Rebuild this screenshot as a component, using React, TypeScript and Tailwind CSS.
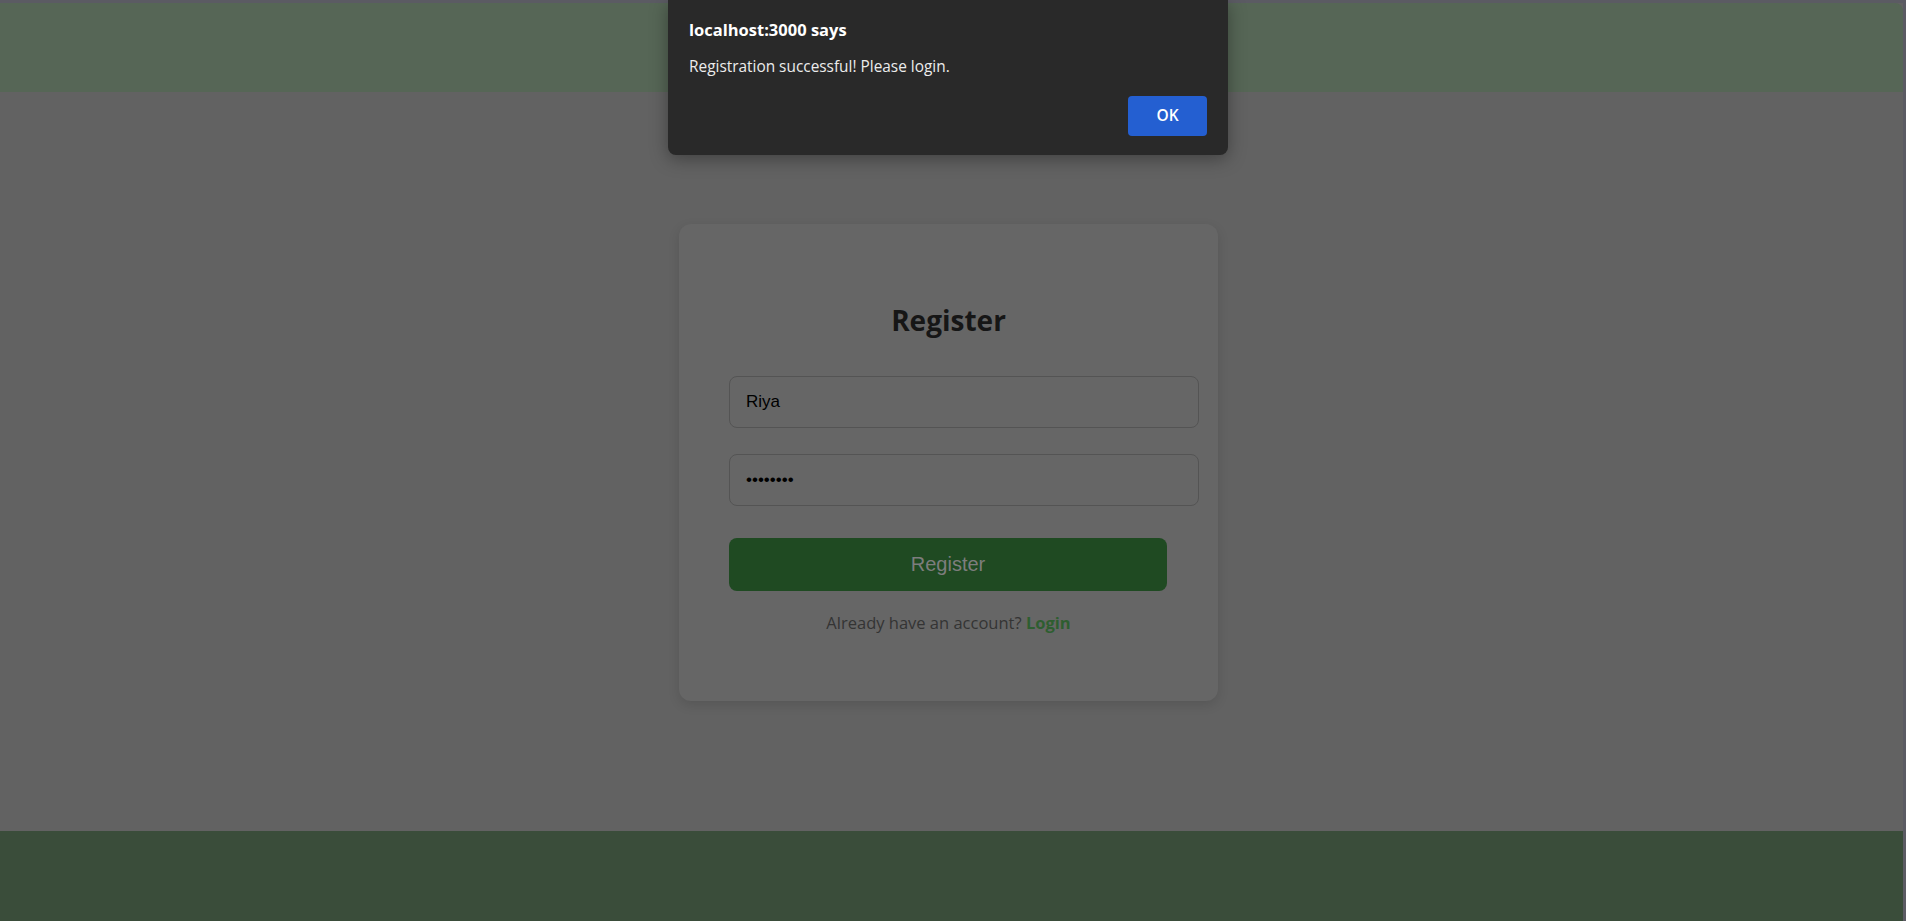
export default function App() {
  return (
    <div className="relative h-[921px] w-[1906px] overflow-hidden bg-[#5b5b63] pr-[3px] pt-[3px] font-['Open_Sans','Noto_Sans',sans-serif]">
      <div className="flex h-full flex-col bg-[#626262]">
        {/* top bar */}
        <header className="h-[89px] shrink-0 rounded-tr-[8px] bg-[#566656]" />

        {/* register card */}
        <main className="flex-1 pt-[132px]">
          <div className="ml-[679px] flex h-[477px] w-[539px] flex-col rounded-[12px] bg-[#666666] px-[50px] pt-[78px] shadow-[0_4px_12px_rgba(0,0,0,0.12)]">
            <h2 className="text-center text-[28px] font-bold leading-[36px] text-[#161616]">
              Register
            </h2>
            <input
              readOnly
              type="text"
              value="Riya"
              className="mt-[38px] h-[52px] w-[470px] rounded-[8px] border border-[#545454] bg-transparent px-[16px] font-['Liberation_Sans',Arial,sans-serif] text-[17px] text-black outline-none"
            />
            <input
              readOnly
              type="password"
              value="riya1234"
              className="mt-[26px] h-[52px] w-[470px] rounded-[8px] border border-[#545454] bg-transparent px-[16px] font-['Liberation_Sans',Arial,sans-serif] text-[17px] text-black outline-none"
            />
            <button className="mt-[32px] h-[53px] w-[438px] rounded-[8px] bg-[#1f4a22] pb-[2px] font-['Liberation_Sans',Arial,sans-serif] text-[20px] text-[#7d7d7d]">
              Register
            </button>
            <p className="mt-[21px] text-center text-[16.5px] leading-[22px] text-[#343434]">
              Already have an account?{" "}
              <span className="font-bold text-[#2e5e30]">Login</span>
            </p>
          </div>
        </main>

        {/* footer */}
        <footer className="h-[90px] shrink-0 bg-[#3a4d3a]" />
      </div>

      {/* alert dialog */}
      <div className="absolute left-[668px] top-0 h-[155px] w-[560px] rounded-b-[8px] bg-[#292929] px-[21px] shadow-[0_4px_18px_rgba(0,0,0,0.35)]">
        <div className="pt-[18px] text-[16.5px] font-bold leading-[24px] text-white">
          localhost:3000 says
        </div>
        <div className="mt-[15px] text-[15.4px] leading-[20px] text-[#ececec]">
          Registration successful! Please login.
        </div>
        <div className="mt-[19px] flex justify-end">
          <button className="h-[40px] w-[79px] rounded-[4px] bg-[#245fd1] text-[15.5px] font-semibold text-white">
            OK
          </button>
        </div>
      </div>
    </div>
  );
}
